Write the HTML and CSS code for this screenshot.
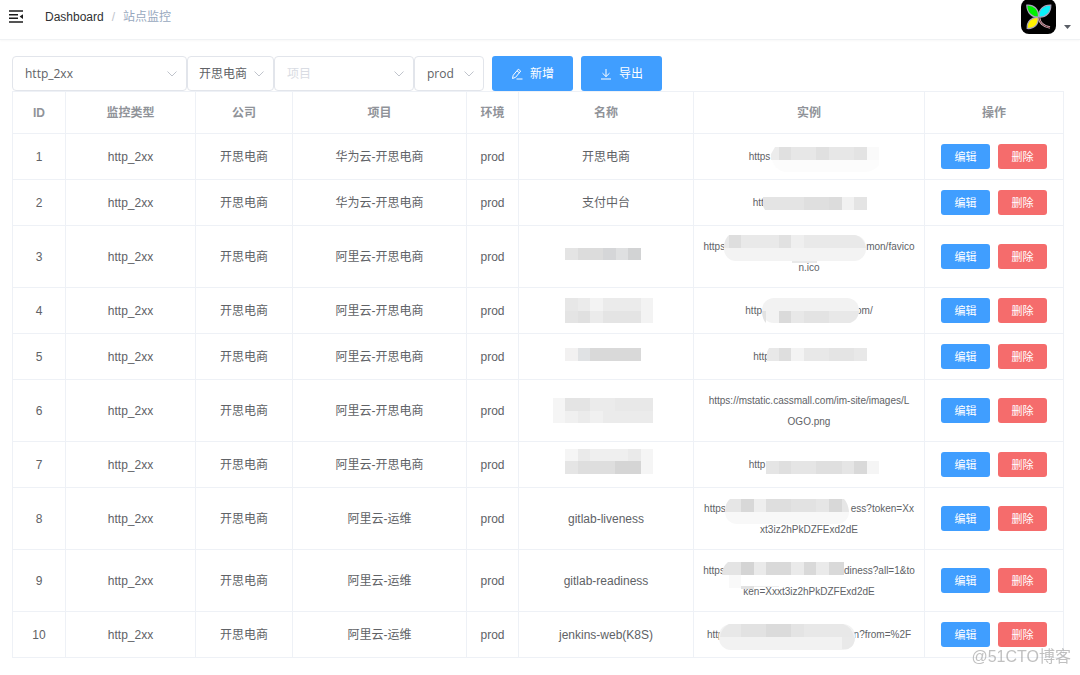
FILE: index.html
```html
<!DOCTYPE html>
<html lang="zh-CN">
<head>
<meta charset="utf-8">
<meta name="viewport" content="width=device-width, initial-scale=1">
<title>站点监控</title>
<link rel="stylesheet" href="styles.css">
</head>
<body>
<header class="navbar">
  <button class="icon-button" type="button" aria-label="收起菜单">
    <svg class="menu-icon" viewBox="0 0 14 13"><path d="M0 1h14M0 4.7h9M0 8.3h9M0 12h14" fill="none" stroke="#1c1c1c" stroke-width="1.6"/><path d="M14 4.2v4.8L10.6 6.6z" fill="#1c1c1c"/></svg>
  </button>
  <nav class="breadcrumb" aria-label="面包屑">
    <a href="#">Dashboard</a><span class="separator">/</span><span class="current">站点监控</span>
  </nav>
  <button class="account" type="button" aria-label="账户">
    <svg class="avatar" viewBox="0 0 35 35">
      <rect y="-1" width="35" height="35" rx="8" fill="#000"/>
      <g stroke="#a9a5bd" stroke-width="1.200">
        <path d="M17.500 17C10.500 17.500 6 12.500 5.800 5.200C13 4.500 18 9.500 17.500 17Z" fill="#00f000"/>
        <path d="M18 17C17 10 22 5 29.800 5.200C30 12.500 25 17.500 18 17Z" fill="#0bf0fa"/>
        <path d="M17 17.500C18 24 13.500 29 6.200 28.500C5.800 21.500 10.500 17 17 17.500Z" fill="#fff200"/>
      </g>
      <path d="M18 17.500C18.500 22 22 26.500 29 27.500" fill="none" stroke="#d3b5bd" stroke-width="2.400"/>
      <path d="M18 17.500C18.500 22 22 26.500 29 27.500" fill="none" stroke="#6d3038" stroke-width="1"/>
    </svg>
    <svg class="caret" viewBox="0 0 7 4"><path d="M0 0h7L3.500 4z" fill="#5a5e66"/></svg>
  </button>
</header>

<main class="content">
  <form class="toolbar">
    <label class="picker picker-type">
      <select aria-label="监控类型"><option>http_2xx</option></select>
      <svg class="chevron" viewBox="0 0 10 6"><path d="M.5 .5L5 5L9.500 .5"/></svg>
    </label>
    <label class="picker picker-company">
      <select aria-label="公司"><option>开思电商</option></select>
      <svg class="chevron" viewBox="0 0 10 6"><path d="M.5 .5L5 5L9.500 .5"/></svg>
    </label>
    <label class="picker picker-project">
      <select class="empty" aria-label="项目"><option>项目</option></select>
      <svg class="chevron" viewBox="0 0 10 6"><path d="M.5 .5L5 5L9.500 .5"/></svg>
    </label>
    <label class="picker picker-env">
      <select aria-label="环境"><option>prod</option></select>
      <svg class="chevron" viewBox="0 0 10 6"><path d="M.5 .5L5 5L9.500 .5"/></svg>
    </label>
    <button class="action" type="button">
      <svg viewBox="0 0 12 12"><path d="M1.500 10.500L2.200 7.300L7.300 1.200L9.700 3.100L4.600 9.300ZM6 2.800L8.400 4.700M5.500 11H11.500"/></svg>新增
    </button>
    <button class="action" type="button">
      <svg viewBox="0 0 12 12"><path d="M6 1v7.500M2.500 5.200L6 8.600L9.500 5.200M1 11h10"/></svg>导出
    </button>
  </form>

  <table class="monitor">
    <colgroup><col class="c-id"><col class="c-type"><col class="c-company"><col class="c-project"><col class="c-env"><col class="c-name"><col class="c-url"><col class="c-ops"></colgroup>
    <thead>
      <tr><th>ID</th><th>监控类型</th><th>公司</th><th>项目</th><th>环境</th><th>名称</th><th>实例</th><th>操作</th></tr>
    </thead>
    <tbody>
      <tr>
        <td>1</td><td>http_2xx</td><td>开思电商</td><td>华为云-开思电商</td><td>prod</td><td>开思电商</td>
        <td class="url"><span class="line">https<i style="width:99px"></i></span>
          <svg class="mask" viewBox="1 1 230 45"><path d="M79 27h107v5q-6 7-14 7H92q-10-2-13-12z" fill="#fcfcfc"/><path d="M174 14h12v13h-12z" fill="#fafafa"/><path d="M82 14h4v13h-8v-6z" fill="#ececec"/><path d="M86 14h88v13H86z" fill="#e7e7e7"/><path d="M86 14h12v13H86zM123 14h13v13h-13z" fill="#e0e0e0"/><path d="M161 14h13v13h-13z" fill="#e3e3e3"/></svg></td>
        <td><div class="ops"><button class="edit" type="button">编辑</button><button class="delete" type="button">删除</button></div></td>
      </tr>
      <tr>
        <td>2</td><td>http_2xx</td><td>开思电商</td><td>华为云-开思电商</td><td>prod</td><td>支付中台</td>
        <td class="url"><span class="line">http<i style="width:96px"></i></span>
          <svg class="mask" viewBox="1 1 230 45"><path d="M70 18h104v13H72l-2-4z" fill="#e4e4e4"/><path d="M111 18h25v13h-25z" fill="#dfdfdf"/><path d="M136 18h13v13h-13z" fill="#dcdcdc"/><path d="M149 18h12v13h-12z" fill="#f1f1f1"/></svg></td>
        <td><div class="ops"><button class="edit" type="button">编辑</button><button class="delete" type="button">删除</button></div></td>
      </tr>
      <tr class="tall">
        <td>3</td><td>http_2xx</td><td>开思电商</td><td>阿里云-开思电商</td><td>prod</td>
        <td class="name"><svg class="mask" viewBox="0 1 174 61"><path d="M46 23h13v12H46z" fill="#e4e4e4"/><path d="M59 23h25v12H59z" fill="#dcdcdc"/><path d="M84 23h13v12H84z" fill="#d5d6d8"/><path d="M97 23h12v12H97z" fill="#dfe0e1"/><path d="M109 23h13v12h-13z" fill="#d2d3d4"/></svg></td>
        <td class="url"><span class="line">https<i style="width:141px"></i>mon/favico</span><span class="line">n.ico</span>
          <svg class="mask" viewBox="1 1 230 61"><rect x="31" y="10" width="142" height="26" rx="12" fill="#f3f3f3"/><path d="M36 10h126q9 2 11 13H31q0-9 5-13z" fill="#e9e9e9"/><path d="M36 10h12v13H36z" fill="#dedede"/><path d="M86 10h12v13H86z" fill="#e1e1e1"/><path d="M98 10h13v13H98z" fill="#efefef"/><path d="M99 36h25v2H99z" fill="#e9e9e9"/></svg></td>
        <td><div class="ops"><button class="edit" type="button">编辑</button><button class="delete" type="button">删除</button></div></td>
      </tr>
      <tr>
        <td>4</td><td>http_2xx</td><td>开思电商</td><td>阿里云-开思电商</td><td>prod</td>
        <td class="name"><svg class="mask" viewBox="0 1 174 45"><path d="M46 11h88v25H46z" fill="#f3f3f3"/><path d="M46 11h25v13H46zM84 11h38v13H84zM71 24h13v12H71z" fill="#ebebeb"/><path d="M46 24h13v12H46zM84 24h38v12H84z" fill="#e4e4e4"/><path d="M46 11h13v13H46z" fill="#e7e7e7"/><path d="M59 24h12v12H59z" fill="#e0e0e0"/></svg></td>
        <td class="url"><span class="line">http<i style="width:94px"></i>om/</span>
          <svg class="mask" viewBox="1 1 230 45"><rect x="69" y="11" width="97" height="25" rx="12" fill="#f2f2f2"/><path d="M69 24h4v12q-4-4-4-12z" fill="#e2e2e2"/><path d="M86 24h80q-1 9-9 12H86z" fill="#e8e8e8"/><path d="M86 24h12v12H86z" fill="#dadada"/><path d="M111 24h25v12h-25z" fill="#e3e3e3"/></svg></td>
        <td><div class="ops"><button class="edit" type="button">编辑</button><button class="delete" type="button">删除</button></div></td>
      </tr>
      <tr>
        <td>5</td><td>http_2xx</td><td>开思电商</td><td>阿里云-开思电商</td><td>prod</td>
        <td class="name"><svg class="mask" viewBox="0 1 174 45"><path d="M46 15h13v13H46z" fill="#f2f1f1"/><path d="M59 15h12v13H59z" fill="#e0e2e4"/><path d="M71 15h51v13H71z" fill="#d9d9d9"/></svg></td>
        <td class="url"><span class="line">http<i style="width:95px"></i></span>
          <svg class="mask" viewBox="1 1 230 45"><path d="M76 15h98v13H74v-9z" fill="#e8e8e8"/><path d="M86 15h12v13H86z" fill="#dedede"/><path d="M98 15h13v13H98z" fill="#f3f3f3"/><path d="M136 15h25v13h-25z" fill="#e4e4e4"/></svg></td>
        <td><div class="ops"><button class="edit" type="button">编辑</button><button class="delete" type="button">删除</button></div></td>
      </tr>
      <tr class="tall">
        <td>6</td><td>http_2xx</td><td>开思电商</td><td>阿里云-开思电商</td><td>prod</td>
        <td class="name"><svg class="mask" viewBox="0 1 174 61"><path d="M34 19h12v25H34z" fill="#f5f5f5"/><path d="M46 19h88v25H46z" fill="#ebebeb"/><path d="M46 19h25v13H46z" fill="#e4e4e4"/><path d="M96 19h38v13H96z" fill="#e8e8e8"/><path d="M46 32h13v12H46zM71 32h13v12H71z" fill="#f0f0f0"/></svg></td>
        <td class="url"><span class="line">https://mstatic.cassmall.com/im-site/images/L</span><span class="line">OGO.png</span></td>
        <td><div class="ops"><button class="edit" type="button">编辑</button><button class="delete" type="button">删除</button></div></td>
      </tr>
      <tr>
        <td>7</td><td>http_2xx</td><td>开思电商</td><td>阿里云-开思电商</td><td>prod</td>
        <td class="name"><svg class="mask" viewBox="0 1 174 45"><path d="M46 8h88v25H46z" fill="#f5f5f5"/><path d="M59 8h12v12H59zM109 8h13v12h-13z" fill="#eaeaea"/><path d="M71 8h38v12H71z" fill="#efefef"/><path d="M46 20h13v13H46z" fill="#e5e5e5"/><path d="M59 20h37v13H59z" fill="#dedede"/><path d="M96 20h26v13H96z" fill="#d5d5d5"/></svg></td>
        <td class="url"><span class="line">http<i style="width:104px"></i></span>
          <svg class="mask" viewBox="1 1 230 45"><path d="M73 20h101v13H73z" fill="#e5e5e5"/><path d="M86 20h12v13H86zM123 20h26v13h-26z" fill="#dfdfdf"/><path d="M161 20h13v13h-13z" fill="#d9d9d9"/><path d="M174 20h12v13h-12z" fill="#f5f5f5"/></svg></td>
        <td><div class="ops"><button class="edit" type="button">编辑</button><button class="delete" type="button">删除</button></div></td>
      </tr>
      <tr class="tall">
        <td>8</td><td>http_2xx</td><td>开思电商</td><td>阿里云-运维</td><td>prod</td><td>gitlab-liveness</td>
        <td class="url"><span class="line">https<i style="width:125px"></i>ess?token=Xx</span><span class="line">xt3iz2hPkDZFExd2dE</span>
          <svg class="mask" viewBox="1 1 230 61"><rect x="32" y="12" width="124" height="25" rx="12" fill="#f8f8f8"/><path d="M37 12h114q4 4 5 13H32q0-9 5-13z" fill="#e6e6e6"/><path d="M48 12h13v13H48zM136 12h13v13h-13z" fill="#d8d8d8"/><path d="M61 12h12v13H61z" fill="#eee"/><path d="M73 12h25v13H73z" fill="#dedede"/><path d="M98 12h25v13H98z" fill="#e2e2e2"/></svg></td>
        <td><div class="ops"><button class="edit" type="button">编辑</button><button class="delete" type="button">删除</button></div></td>
      </tr>
      <tr class="tall">
        <td>9</td><td>http_2xx</td><td>开思电商</td><td>阿里云-运维</td><td>prod</td><td>gitlab-readiness</td>
        <td class="url"><span class="line">https<i style="width:119px"></i>diness?all=1&amp;to</span><span class="line">ken=Xxxt3iz2hPkDZFExd2dE</span>
          <svg class="mask" viewBox="1 1 230 61"><path d="M35 13h116v13H29q0-8 6-13z" fill="#e4e4e4"/><path d="M48 13h13v13H48z" fill="#d4d4d4"/><path d="M61 13h12v13H61zM98 13h13v13H98zM123 13h13v13h-13z" fill="#eaeaea"/><path d="M73 13h25v13H73zM111 13h12v13h-12zM136 13h15v13h-15z" fill="#d9d9d9"/><path d="M36 26h12v13H36z" fill="#f9f9f9"/><path d="M48 37h13v3H48z" fill="#e2e2e2"/><path d="M61 37h25v1H61z" fill="#eee"/></svg></td>
        <td><div class="ops"><button class="edit" type="button">编辑</button><button class="delete" type="button">删除</button></div></td>
      </tr>
      <tr>
        <td>10</td><td>http_2xx</td><td>开思电商</td><td>阿里云-运维</td><td>prod</td><td>jenkins-web(K8S)</td>
        <td class="url"><span class="line">http<i style="width:130px"></i>n?from=%2F</span>
          <svg class="mask" viewBox="1 1 230 45"><rect x="26" y="13" width="136" height="26" rx="12" fill="#f2f2f2"/><path d="M36 13h114q9 3 11 13H27q1-9 9-13z" fill="#e8e8e8"/><path d="M48 13h13v13H48zM61 13h12v13H61z" fill="#e2e2e2"/><path d="M73 13h25v13H73z" fill="#dbdbdb"/><path d="M98 13h13v13H98z" fill="#e4e4e4"/><path d="M149 26h13q0 9-7 12h-6z" fill="#e9e9e9"/></svg></td>
        <td><div class="ops"><button class="edit" type="button">编辑</button><button class="delete" type="button">删除</button></div></td>
      </tr>
    </tbody>
  </table>
</main>
<div class="watermark">@51CTO博客</div>
</body>
</html>
```

FILE: styles.css
```css
* { box-sizing: border-box; }

body {
  margin: 0;
  background: #fff;
  color: #606266;
  font: 12px/20px "Liberation Sans", "Noto Sans CJK SC", sans-serif;
}

button, select { font: inherit; margin: 0; }
button { cursor: pointer; }
svg { display: block; }

.navbar {
  display: flex;
  align-items: flex-start;
  height: 40px;
  padding: 0 9px;
  border-bottom: 1px solid #f0f2f4;
  box-shadow: 0 1px 2px rgba(0, 21, 41, .03);
}
.icon-button { padding: 10px 0; border: 0; background: none; }
.menu-icon { width: 14px; height: 13px; }

.breadcrumb { display: flex; flex: 1; gap: 8px; padding: 7px 0 0 22px; }
.breadcrumb a { color: #303133; text-decoration: none; }
.separator { color: #c0c4cc; }
.current { color: #97a8be; }

.account {
  display: flex;
  align-items: flex-end;
  gap: 8px;
  padding: 0;
  border: 0;
  background: none;
}
.avatar { width: 35px; height: 35px; }
.caret { width: 7px; height: 4px; margin-bottom: 6px; }

.content { padding: 16px 16px 16px 12px; }

.toolbar { display: flex; height: 35px; }
.picker { position: relative; }
.picker select {
  width: 100%;
  height: 100%;
  padding: 0 12px;
  appearance: none;
  border: 1px solid #e2e5eb;
  border-radius: 4px;
  background: #fff;
  color: #606266;
  font-family: "Open Sans", "Noto Sans CJK SC", sans-serif;
}
.picker .empty { color: #d9dce3; }
.picker-type { width: 175px; }
.picker-company { width: 87px; }
.picker-company select { padding: 0 11px; }
.picker-project { width: 140px; }
.picker-env { width: 70px; }
.chevron {
  position: absolute;
  top: 15px;
  right: 10px;
  width: 10px;
  height: 6px;
  fill: none;
  stroke: #c0c4cc;
  pointer-events: none;
}

.action {
  display: flex;
  align-items: center;
  justify-content: center;
  gap: 7px;
  width: 81px;
  margin-left: 8px;
  padding: 0;
  border: 0;
  border-radius: 3px;
  background: #409eff;
  color: #fff;
}
.action svg { width: 12px; height: 12px; fill: none; stroke: #fff; stroke-width: 1; }

.monitor {
  width: 100%;
  table-layout: fixed;
  border-collapse: separate;
  border-spacing: 0;
  border: solid #eef1f6;
  border-width: 1px 0 0 1px;
  text-align: center;
}
.c-id { width: 53px; }
.c-type { width: 130px; }
.c-company { width: 97px; }
.c-project { width: 174px; }
.c-env { width: 52px; }
.c-name { width: 175px; }
.c-url { width: 231px; }
.c-ops { width: 139px; }

th, td {
  height: 46px;
  padding: 0;
  border: solid #eef1f6;
  border-width: 0 1px 1px 0;
}
th { height: 42px; color: #909399; font-weight: bold; }
.tall td { height: 62px; }

.name, .url { position: relative; }
.url { font-size: 10px; line-height: 21px; }
.line { display: flex; justify-content: center; white-space: nowrap; }
.line i { flex: none; }
.mask { position: absolute; top: 0; left: 0; width: 100%; height: 100%; }

.ops { display: flex; justify-content: center; gap: 8px; }
.ops button {
  width: 49px;
  height: 25px;
  padding: 0;
  border: 0;
  border-radius: 3px;
  color: #fff;
  font-size: 11px;
}
.ops .edit { background: #409eff; }
.ops .delete { background: #f56c6c; }

.watermark {
  position: fixed;
  right: 9px;
  bottom: 8px;
  color: rgba(150, 150, 150, .6);
  font-size: 16px;
  pointer-events: none;
}
```
